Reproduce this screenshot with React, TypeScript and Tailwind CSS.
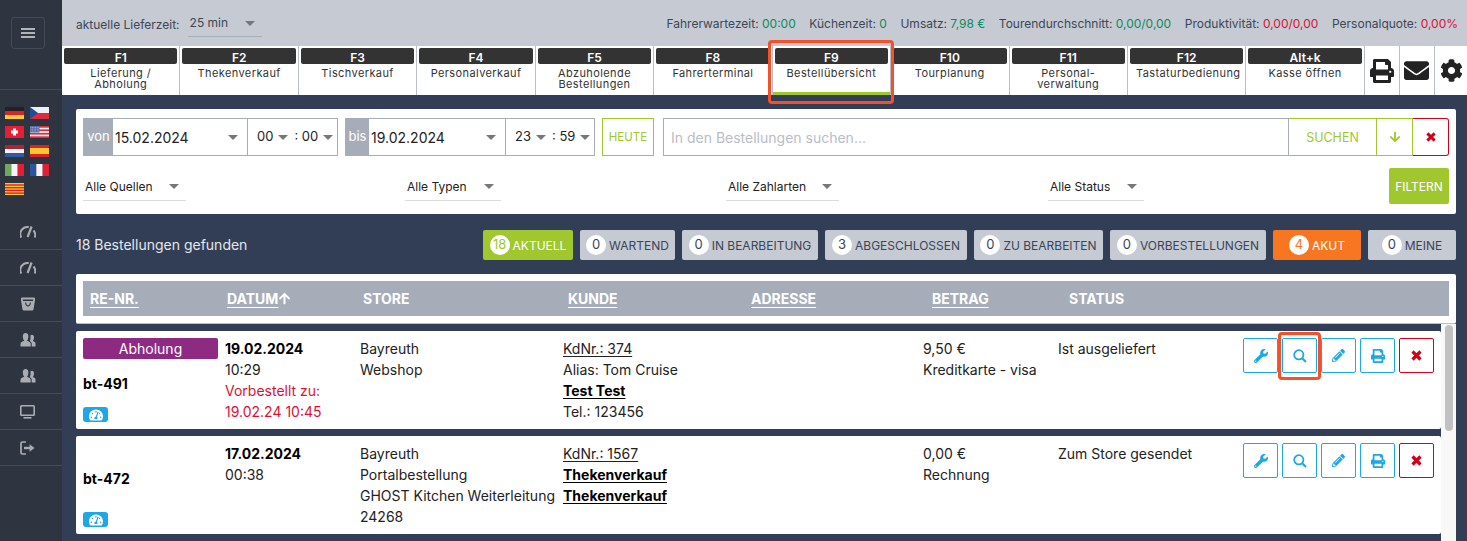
import React from 'react';
import {
  FaWrench,
  FaPencilAlt,
  FaPrint,
  FaArrowDown,
  FaArrowUp,
  FaCog,
  FaEnvelope,
  FaTachometerAlt,
} from 'react-icons/fa';

const tabs = [
  ['F1', 'Lieferung / Abholung'],
  ['F2', 'Thekenverkauf'],
  ['F3', 'Tischverkauf'],
  ['F4', 'Personalverkauf'],
  ['F5', 'Abzuholende Bestellungen'],
  ['F8', 'Fahrerterminal'],
  ['F9', 'Bestellübersicht'],
  ['F10', 'Tourplanung'],
  ['F11', 'Personal- verwaltung'],
  ['F12', 'Tastaturbedienung'],
  ['Alt+k', 'Kasse öffnen'],
];

const stats = [
  { label: 'Fahrerwartezeit:', value: '00:00', red: false },
  { label: 'Küchenzeit:', value: '0', red: false },
  { label: 'Umsatz:', value: '7,98 €', red: false },
  { label: 'Tourendurchschnitt:', value: '0,00/0,00', red: false },
  { label: 'Produktivität:', value: '0,00/0,00', red: true },
  { label: 'Personalquote:', value: '0,00%', red: true },
];

const chips = [
  { count: '18', label: 'AKTUELL', w: 'w-[90px]', tone: 'bg-[#a0c82e] text-white', num: 'text-[#a0c82e]' },
  { count: '0', label: 'WARTEND', w: 'w-[95px]', tone: 'bg-[#c5cad3] text-[#3a4558]', num: 'text-[#3a4558]' },
  { count: '0', label: 'IN BEARBEITUNG', w: 'w-[136px]', tone: 'bg-[#c5cad3] text-[#3a4558]', num: 'text-[#3a4558]' },
  { count: '3', label: 'ABGESCHLOSSEN', w: 'w-[142px]', tone: 'bg-[#c5cad3] text-[#3a4558]', num: 'text-[#3a4558]' },
  { count: '0', label: 'ZU BEARBEITEN', w: 'w-[129px]', tone: 'bg-[#c5cad3] text-[#3a4558]', num: 'text-[#3a4558]' },
  { count: '0', label: 'VORBESTELLUNGEN', w: 'w-[156px]', tone: 'bg-[#c5cad3] text-[#3a4558]', num: 'text-[#3a4558]' },
  { count: '4', label: 'AKUT', w: 'w-[88px]', tone: 'bg-[#f7761f] text-white', num: 'text-[#f7761f]' },
  { count: '0', label: 'MEINE', w: 'w-[88px]', tone: 'bg-[#c5cad3] text-[#3a4558]', num: 'text-[#3a4558]' },
];

const Caret = ({ className = '' }: { className?: string }) => (
  <span className={`inline-block w-0 h-0 border-x-[5.5px] border-x-transparent border-t-[5.5px] border-t-[#777] ${className}`} />
);

const Cross = ({ size = 11 }: { size?: number }) => (
  <svg width={size} height={size} viewBox="0 0 11 11" stroke="currentColor" strokeWidth="3.2">
    <path d="M1.5 1.5 L9.5 9.5 M9.5 1.5 L1.5 9.5" />
  </svg>
);

const Loupe = () => (
  <svg width="14" height="14" viewBox="0 0 14 14" fill="none" stroke="currentColor">
    <circle cx="5.8" cy="5.8" r="4.6" strokeWidth="1.8" />
    <path d="M9.2 9.2 L13 13" strokeWidth="2" />
  </svg>
);

// sidebar glyphs
const Gauge = () => (
  <svg width="16" height="13" viewBox="0 0 16 13" fill="none" stroke="#a9adb3" strokeWidth="2">
    <path d="M1.3 12.5 A7 7 0 0 1 8.8 2.1" />
    <path d="M13.5 5.5 A7 7 0 0 1 14.8 12.5" />
    <path d="M7.6 12 L11.6 1.5" strokeWidth="2.2" />
  </svg>
);
const Basket = () => (
  <svg width="14" height="14" viewBox="0 0 14 14" fill="#a9adb3">
    <path d="M1 0.5 H13 Q14 0.5 14 1.5 V3 L12.6 12 Q12.4 13.5 11 13.5 H3 Q1.6 13.5 1.4 12 L0 3 V1.5 Q0 0.5 1 0.5 Z M1.6 2.6 L2.2 4 H11.8 L12.4 2.6 Z M4 5.5 Q4.6 9.5 7 9.5 Q9.4 9.5 10 5.5 H9 Q8.6 8.2 7 8.2 Q5.4 8.2 5 5.5 Z" fillRule="evenodd" />
  </svg>
);
const People = () => (
  <svg width="16" height="15" viewBox="0 0 16 15" fill="#a9adb3">
    <path d="M0.5 14.5 V11.8 Q0.5 10.4 2.4 9.6 L4.2 8.8 Q2.8 7.2 2.8 4.6 Q2.8 1 5.6 1 Q8.4 1 8.4 4.6 Q8.4 7.2 7 8.8 L8.8 9.6 Q10.7 10.4 10.7 11.8 V14.5 Z" />
    <path d="M11.7 14.5 V11.6 Q11.7 10 9.8 8.9 Q10.9 7.4 10.5 3.2 Q11 2.8 11.8 2.8 Q14 2.8 14 5.6 Q14 7.8 12.8 9 L14 9.6 Q15.5 10.3 15.5 11.6 V14.5 Z" />
  </svg>
);
const Monitor = () => (
  <svg width="15" height="14" viewBox="0 0 15 14" fill="#a9adb3">
    <path d="M1.5 0 H13.5 Q15 0 15 1.5 V9.5 Q15 11 13.5 11 H1.5 Q0 11 0 9.5 V1.5 Q0 0 1.5 0 Z M1.6 1.6 V9.4 H13.4 V1.6 Z" fillRule="evenodd" />
    <rect x="3.5" y="12" width="8" height="1.6" />
  </svg>
);
const Logout = () => (
  <svg width="15" height="14" viewBox="0 0 15 14" fill="none" stroke="#a9adb3" strokeWidth="1.7">
    <path d="M6 1 H2.4 Q1 1 1 2.4 V11.6 Q1 13 2.4 13 H6" />
    <path d="M4 7 H10" strokeWidth="2.4" />
    <path d="M9.6 3.2 L14.5 7 L9.6 10.8 Z" fill="#a9adb3" stroke="none" />
  </svg>
);

const flags: React.ReactNode[] = [
  <svg key="de" viewBox="0 0 19 12" className="w-full h-full"><rect width="19" height="4" fill="#222" /><rect y="4" width="19" height="4" fill="#d8232a" /><rect y="8" width="19" height="4" fill="#fbcd2c" /></svg>,
  <svg key="cz" viewBox="0 0 19 12" className="w-full h-full"><rect width="19" height="6" fill="#eef1f5" /><rect y="6" width="19" height="6" fill="#dd2a3c" /><path d="M0 0 L8 6 L0 12 Z" fill="#1f4e9b" /></svg>,
  <svg key="ch" viewBox="0 0 19 12" className="w-full h-full"><rect width="19" height="12" fill="#e41f35" /><rect x="8" y="2.5" width="3" height="7" fill="#fff" /><rect x="6" y="4.5" width="7" height="3" fill="#fff" /></svg>,
  <svg key="us" viewBox="0 0 19 12" className="w-full h-full"><rect width="19" height="12" fill="#f1f1f1" /><rect width="19" height="1.7" fill="#d8303f" /><rect y="3.4" width="19" height="1.7" fill="#d8303f" /><rect y="6.9" width="19" height="1.7" fill="#d8303f" /><rect y="10.3" width="19" height="1.7" fill="#d8303f" /><rect width="9.5" height="6.5" fill="#5a6aa8" /><path d="M0.5 1.5 H9 M0.5 3.2 H9 M0.5 5 H9" stroke="#c5cbe4" strokeWidth="0.7" strokeDasharray="0.8 0.8" /></svg>,
  <svg key="nl" viewBox="0 0 19 12" className="w-full h-full"><rect width="19" height="4" fill="#a8283a" /><rect y="4" width="19" height="4" fill="#f4f4f4" /><rect y="8" width="19" height="4" fill="#2f5aa8" /></svg>,
  <svg key="es" viewBox="0 0 19 12" className="w-full h-full"><rect width="19" height="12" fill="#d8232a" /><rect y="3" width="19" height="6" fill="#fbc52c" /></svg>,
  <svg key="it" viewBox="0 0 19 12" className="w-full h-full"><rect width="6.3" height="12" fill="#6fa858" /><rect x="6.3" width="6.4" height="12" fill="#f4f4f4" /><rect x="12.7" width="6.3" height="12" fill="#e41f35" /></svg>,
  <svg key="fr" viewBox="0 0 19 12" className="w-full h-full"><rect width="6.3" height="12" fill="#2a55a5" /><rect x="6.3" width="6.4" height="12" fill="#f4f4f4" /><rect x="12.7" width="6.3" height="12" fill="#e41f35" /></svg>,
  <svg key="ca" viewBox="0 0 19 12" className="w-full h-full"><rect width="19" height="12" fill="#fbc52c" /><rect y="1.3" width="19" height="1.4" fill="#d8232a" /><rect y="4" width="19" height="1.4" fill="#d8232a" /><rect y="6.7" width="19" height="1.4" fill="#d8232a" /><rect y="9.4" width="19" height="1.4" fill="#d8232a" /></svg>,
];

const Sidebar = () => (
  <aside className="w-[62px] shrink-0 bg-[#2e3540] flex flex-col">
    <div className="h-[90px] shrink-0 border-b border-[#454c56] pl-[11px] pt-[17px]">
      <div className="w-[34px] h-[32px] border border-[#454c58] rounded-[3px] flex flex-col items-center justify-center gap-[2px]">
        <span className="w-[14px] h-[2px] bg-[#b0b4ba]" />
        <span className="w-[14px] h-[2px] bg-[#b0b4ba]" />
        <span className="w-[14px] h-[2px] bg-[#b0b4ba]" />
      </div>
    </div>
    <div className="grid grid-cols-[19px_19px] gap-x-[6px] gap-y-[7px] pl-[5px] pt-[17px] h-[124px] shrink-0 content-start">
      {flags.map((f, i) => (
        <div key={i} className="w-[19px] h-[12px]">{f}</div>
      ))}
    </div>
    <div className="h-[36px] shrink-0 border-b border-[#454c56] flex items-center justify-center pr-[7px]"><Gauge /></div>
    <div className="h-[36px] shrink-0 border-b border-[#454c56] flex items-center justify-center pr-[7px]"><Gauge /></div>
    <div className="h-[36px] shrink-0 border-b border-[#454c56] flex items-center justify-center pr-[7px]"><Basket /></div>
    <div className="h-[36px] shrink-0 border-b border-[#454c56] flex items-center justify-center pr-[7px]"><People /></div>
    <div className="h-[36px] shrink-0 border-b border-[#454c56] flex items-center justify-center pr-[7px]"><People /></div>
    <div className="h-[36px] shrink-0 border-b border-[#454c56] flex items-center justify-center pr-[7px]"><Monitor /></div>
    <div className="h-[36px] shrink-0 border-b border-[#454c56] flex items-center justify-center pr-[7px]"><Logout /></div>
  </aside>
);

const TopBar = () => (
  <div className="h-[46px] shrink-0 bg-[#c5cad3] flex items-start pl-[14px] pr-[9px] text-[#3d4756]">
    <span className="text-[12px] mt-[16px]">aktuelle Lieferzeit:</span>
    <div className="ml-[8px] mt-[8px] w-[74px] h-[29px] border-b border-[#a9afb9] flex items-center justify-between pl-[2px] pr-[7px] pt-[2px] text-[12px]">
      <span>25 min</span>
      <Caret />
    </div>
    <div className="ml-auto mt-[15px] flex gap-[13.6px] text-[12px]">
      {stats.map((s) => (
        <span key={s.label}>
          {s.label} <span className={s.red ? 'text-[#dc1036]' : 'text-[#0d8a5a]'}>{s.value}</span>
        </span>
      ))}
    </div>
  </div>
);

const TabBar = () => (
  <div className="h-[49px] shrink-0 bg-white flex relative">
    {tabs.map(([key, label]) => (
      <div key={key} className="w-[118.45px] shrink-0 h-full border-r border-[#b8bdc7] px-[2px] pt-[2px] relative overflow-hidden">
        <div className="h-[16px] bg-[#333] rounded-[2px] text-white text-[12px] font-semibold leading-[19px] text-center overflow-hidden">{key}</div>
        <div className="text-[11px] leading-[11px] tracking-[0.4px] text-[#333] text-center mt-[4px] px-[6px] overflow-hidden">{label}</div>
        {key === 'F9' && <div className="absolute left-0 right-0 bottom-0 h-[3px] bg-[#a0c82e]" />}
      </div>
    ))}
    <div className="w-[35px] border-r border-[#b8bdc7] flex items-center justify-center text-[#222]"><FaPrint size={24} /></div>
    <div className="w-[35px] border-r border-[#b8bdc7] flex items-center justify-center text-[#222]"><FaEnvelope size={25} /></div>
    <div className="flex-1 flex items-center justify-center pl-[2px] text-[#222]"><FaCog size={23} /></div>
    <div className="absolute left-[706px] top-[-6px] w-[126px] h-[64px] border-[3px] border-[#f4502a] rounded-[4px]" />
  </div>
);

const DateGroup = ({ label, labelW, date, w, timeW, hour, minute }: { label: string; labelW: string; date: string; w: string; timeW: string; hour: string; minute: string }) => (
  <div className="flex h-[38px] border border-[#a7adb8]">
    <div className={`${labelW} shrink-0 bg-[#a7adb8] text-white text-[13px] flex items-center justify-center`}>{label}</div>
    <div className={`${w} shrink-0 flex items-center justify-between pl-[2px] pr-[9px] text-[14px] text-[#222] border-r border-[#a7adb8]`}>
      <span>{date}</span>
      <Caret />
    </div>
    <div className={`${timeW} shrink-0 flex items-center pl-[9px] text-[13px] text-[#222]`}>
      <span>{hour}</span>
      <Caret className="ml-[5px] mr-[6px]" />
      <span>: {minute}</span>
      <Caret className="ml-[5px]" />
    </div>
  </div>
);

const FilterSelect = ({ label, w }: { label: string; w: string }) => (
  <div className={`${w} h-[33px] border-b border-[#dcdcdc] flex items-center justify-between pl-[2px] pr-[7px] pt-[5px] text-[12px] text-[#222]`}>
    <span>{label}</span>
    <Caret />
  </div>
);

const Filters = () => (
  <div className="bg-white rounded-[2px] h-[105px] shrink-0 px-[7px] pt-[9px]">
    <div className="flex">
      <DateGroup label="von" labelW="w-[29px]" date="15.02.2024" w="w-[135px]" timeW="w-[89px]" hour="00" minute="00" />
      <div className="w-[7px]" />
      <DateGroup label="bis" labelW="w-[23px]" date="19.02.2024" w="w-[137px]" timeW="w-[88px]" hour="23" minute="59" />
      <div className="ml-[7px] w-[52px] h-[38px] border border-[#a0c82e] text-[#a0c82e] text-[11.5px] pt-[2px] flex items-center justify-center">HEUTE</div>
      <div className="ml-[9px] flex-1 h-[38px] border border-[#a7adb8] flex items-center pl-[7px] text-[14px] text-[#b9bdc4]">In den Bestellungen suchen...</div>
      <div className="w-[88px] h-[38px] border border-l-0 border-[#a0c82e] text-[#a0c82e] text-[12.5px] pt-[2px] flex items-center justify-center">SUCHEN</div>
      <div className="w-[36px] h-[38px] border-y border-r border-[#a0c82e] text-[#a0c82e] flex items-center justify-center"><FaArrowDown size={12} /></div>
      <div className="w-[36px] h-[38px] border border-l-0 border-[#d0021b] rounded-r-[3px] text-[#d0021b] flex items-center justify-center"><Cross size={10} /></div>
    </div>
    <div className="flex mt-[12px] items-start">
      <FilterSelect label="Alle Quellen" w="w-[103px]" />
      <div className="ml-[219px]"><FilterSelect label="Alle Typen" w="w-[96px]" /></div>
      <div className="ml-[225px]"><FilterSelect label="Alle Zahlarten" w="w-[113px]" /></div>
      <div className="ml-[209px]"><FilterSelect label="Alle Status" w="w-[96px]" /></div>
      <div className="ml-auto w-[60px] h-[36px] bg-[#a0c82e] rounded-[2px] text-white text-[12px] pt-[1px] flex items-center justify-center">FILTERN</div>
    </div>
  </div>
);

const ChipRow = () => (
  <div className="flex items-center h-[30px] mt-[16px] shrink-0">
    <span className="text-[#e4e7ec] text-[14px] pb-[1px]">18 Bestellungen gefunden</span>
    <div className="ml-auto flex gap-[7px]">
      {chips.map((c) => (
        <div key={c.label} className={`${c.w} h-[30px] rounded-[2px] flex items-center justify-center gap-[3px] text-[12px] ${c.tone}`}>
          <span className={`w-[20px] h-[20px] rounded-full bg-white flex items-center justify-center text-[13px] ${c.num}`}>{c.count}</span>
          <span className="pt-[1px]">{c.label}</span>
        </div>
      ))}
    </div>
  </div>
);

const TableHead = () => (
  <div className="mt-[14px] bg-white rounded-[2px] h-[50px] shrink-0 p-[7px] border-b border-[#b8bdc7]">
    <div className="h-[35px] bg-[#a7adb8] text-white text-[14px] font-bold grid grid-cols-[137px_136px_205px_183px_181px_137px_1fr] pl-[7px] items-center">
      <span><span className="underline underline-offset-3">RE-NR.</span></span>
      <span className="flex items-center"><span className="underline underline-offset-3">DATUM</span><FaArrowUp size={13} /></span>
      <span>STORE</span>
      <span><span className="underline underline-offset-3">KUNDE</span></span>
      <span><span className="underline underline-offset-3">ADRESSE</span></span>
      <span><span className="underline underline-offset-3">BETRAG</span></span>
      <span>STATUS</span>
    </div>
  </div>
);

const ActionButtons = ({ marked }: { marked?: boolean }) => (
  <div className="flex gap-[4px] relative">
    <button className="w-[35px] h-[35px] border border-[#1da6e8] rounded-[2px] text-[#1da6e8] flex items-center justify-center"><FaWrench size={14} /></button>
    <button className="w-[35px] h-[35px] border border-[#1da6e8] rounded-[2px] text-[#1da6e8] flex items-center justify-center"><Loupe /></button>
    <button className="w-[35px] h-[35px] border border-[#1da6e8] rounded-[2px] text-[#1da6e8] flex items-center justify-center"><FaPencilAlt size={13} /></button>
    <button className="w-[35px] h-[35px] border border-[#1da6e8] rounded-[2px] text-[#1da6e8] flex items-center justify-center"><FaPrint size={14} /></button>
    <button className="w-[35px] h-[35px] border border-[#d0021b] rounded-[2px] text-[#d0021b] flex items-center justify-center"><Cross /></button>
    {marked && <div className="absolute left-[35px] top-[-6px] w-[43px] h-[48px] border-[3px] border-[#f4502a] rounded-[4px]" />}
  </div>
);

const Row = ({ children, id, badge, date, time, marked, extra }: { children: React.ReactNode; id: string; badge?: string; date: string; time: string; marked?: boolean; extra?: React.ReactNode }) => (
  <div className="bg-white rounded-[2px] h-[98px] shrink-0 grid grid-cols-[142px_135px_203px_360px_135px_185px_1fr] pl-[7px] pt-[7px] text-[14px] leading-[21px] text-[#222]">
    <div className="w-[135px] h-[84px] flex flex-col justify-between">
      {badge ? (
        <div className="h-[21px] bg-[#8e2a82] rounded-[2px] text-white text-center">{badge}</div>
      ) : (
        <div className="h-[1px]" />
      )}
      <div className="font-bold text-black">{id}</div>
      <div className="w-[25px] h-[15px] bg-[#1da6e8] rounded-[3px] text-white flex items-center justify-center"><FaTachometerAlt size={14} /></div>
    </div>
    <div>
      <div className="font-bold text-black">{date}</div>
      <div>{time}</div>
      {extra}
    </div>
    {children}
    <ActionButtons marked={marked} />
  </div>
);

export default function App() {
  return (
    <div className="w-[1467px] h-[541px] overflow-hidden flex bg-[#323e55] font-['Inter',sans-serif]">
      <Sidebar />
      <main className="flex-1 flex flex-col min-w-0">
        <TopBar />
        <TabBar />
        <div className="flex-1 flex flex-col pl-[14px] pr-[11px] pt-[14px] min-h-0">
          <Filters />
          <ChipRow />
          <TableHead />
          <div className="flex flex-1 min-h-0">
            <div className="w-[1365px] flex flex-col gap-[7px] pt-[7px] shrink-0">
              <Row
                id="bt-491"
                badge="Abholung"
                date="19.02.2024"
                time="10:29"
                marked
                extra={
                  <div className="text-[#dc1036]">
                    Vorbestellt zu:
                    <br />
                    19.02.24 10:45
                  </div>
                }
              >
                <div>Bayreuth<br />Webshop</div>
                <div>
                  <div className="underline underline-offset-2">KdNr.: 374</div>
                  <div>Alias: Tom Cruise</div>
                  <div className="font-bold underline underline-offset-2 text-black">Test Test</div>
                  <div>Tel.: 123456</div>
                </div>
                <div>9,50 €<br />Kreditkarte - visa</div>
                <div>Ist ausgeliefert</div>
              </Row>
              <Row id="bt-472" date="17.02.2024" time="00:38">
                <div className="whitespace-nowrap">Bayreuth<br />Portalbestellung<br />GHOST Kitchen Weiterleitung<br />24268</div>
                <div>
                  <div className="underline underline-offset-2">KdNr.: 1567</div>
                  <div className="font-bold underline underline-offset-2 text-black">Thekenverkauf</div>
                  <div className="font-bold underline underline-offset-2 text-black">Thekenverkauf</div>
                </div>
                <div>0,00 €<br />Rechnung</div>
                <div>Zum Store gesendet</div>
              </Row>
            </div>
            <div className="w-[15px] bg-[#f8f8f8] shrink-0 flex justify-center pt-[1px]">
              <div className="w-[8px] h-[106px] bg-[#c1c1c1] rounded-[4px]" />
            </div>
          </div>
        </div>
      </main>
    </div>
  );
}
